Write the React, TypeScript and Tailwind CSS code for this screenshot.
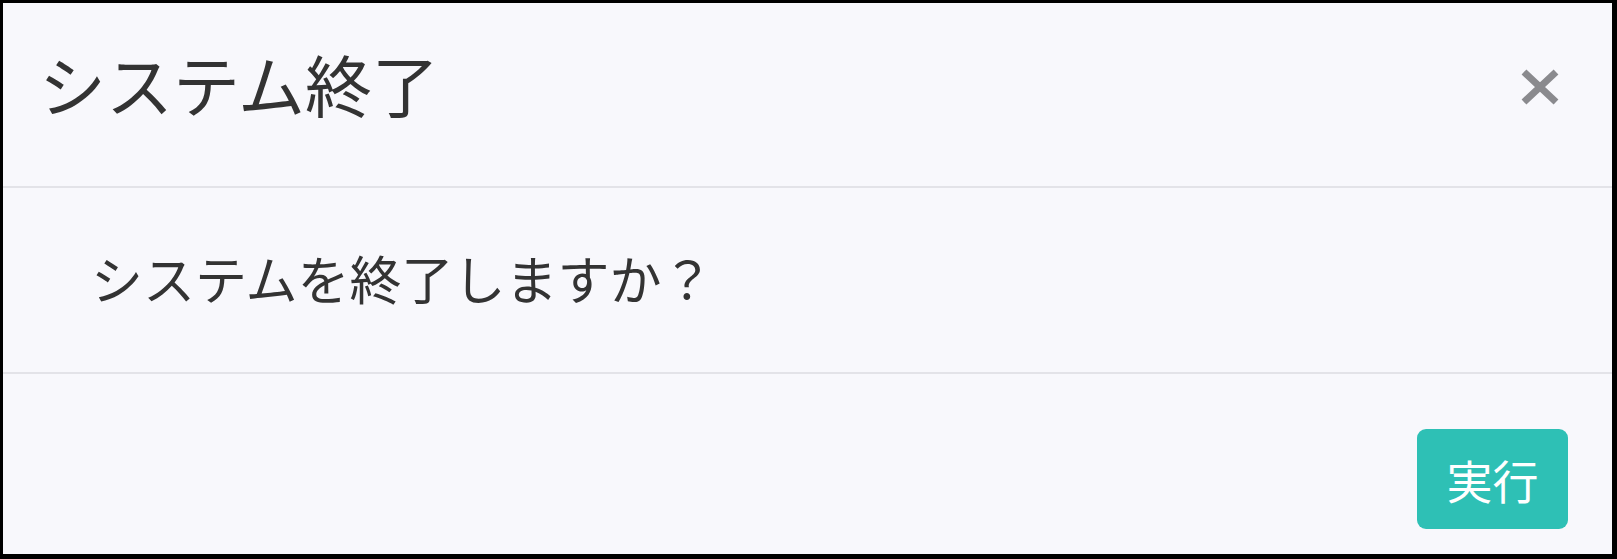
import React from 'react';

const jp = { fontFamily: '"Noto Sans CJK JP", "Noto Sans", sans-serif' };

const CloseIcon: React.FC = () => (
  <svg width="40" height="36" viewBox="0 0 40 36" className="block">
    <path d="M4 3 L36 33 M36 3 L4 33" stroke="#8a8a8e" strokeWidth="7" strokeLinecap="butt" />
  </svg>
);

const App: React.FC = () => {
  return (
    <div
      className="w-[1617px] h-[559px] flex flex-col bg-[#f8f8fc] border-t-[3px] border-l-[3px] border-r-[5px] border-b-[5px] border-black text-[#333333]"
      style={jp}
    >
      {/* Header */}
      <div className="h-[185px] shrink-0 flex items-center justify-between pl-[36px] pr-[52px] border-b-2 border-[#e3e3e8]">
        <h1 className="text-[67px] leading-none font-normal pb-[25px]">システム終了</h1>
        <button className="pb-[16px]">
          <CloseIcon />
        </button>
      </div>

      {/* Body */}
      <div className="h-[186px] shrink-0 flex items-center pl-[88px] border-b-2 border-[#e3e3e8]">
        <p className="text-[52px] leading-none pb-[4px]">システムを終了しますか？</p>
      </div>

      {/* Footer */}
      <div className="flex-1 flex items-start justify-end pr-[44px] pt-[55px]">
        <button className="w-[151px] h-[100px] rounded-[9px] bg-[#2ec0b5] text-white text-[46px] leading-none flex items-center justify-center">
          実行
        </button>
      </div>
    </div>
  );
};

export default App;
